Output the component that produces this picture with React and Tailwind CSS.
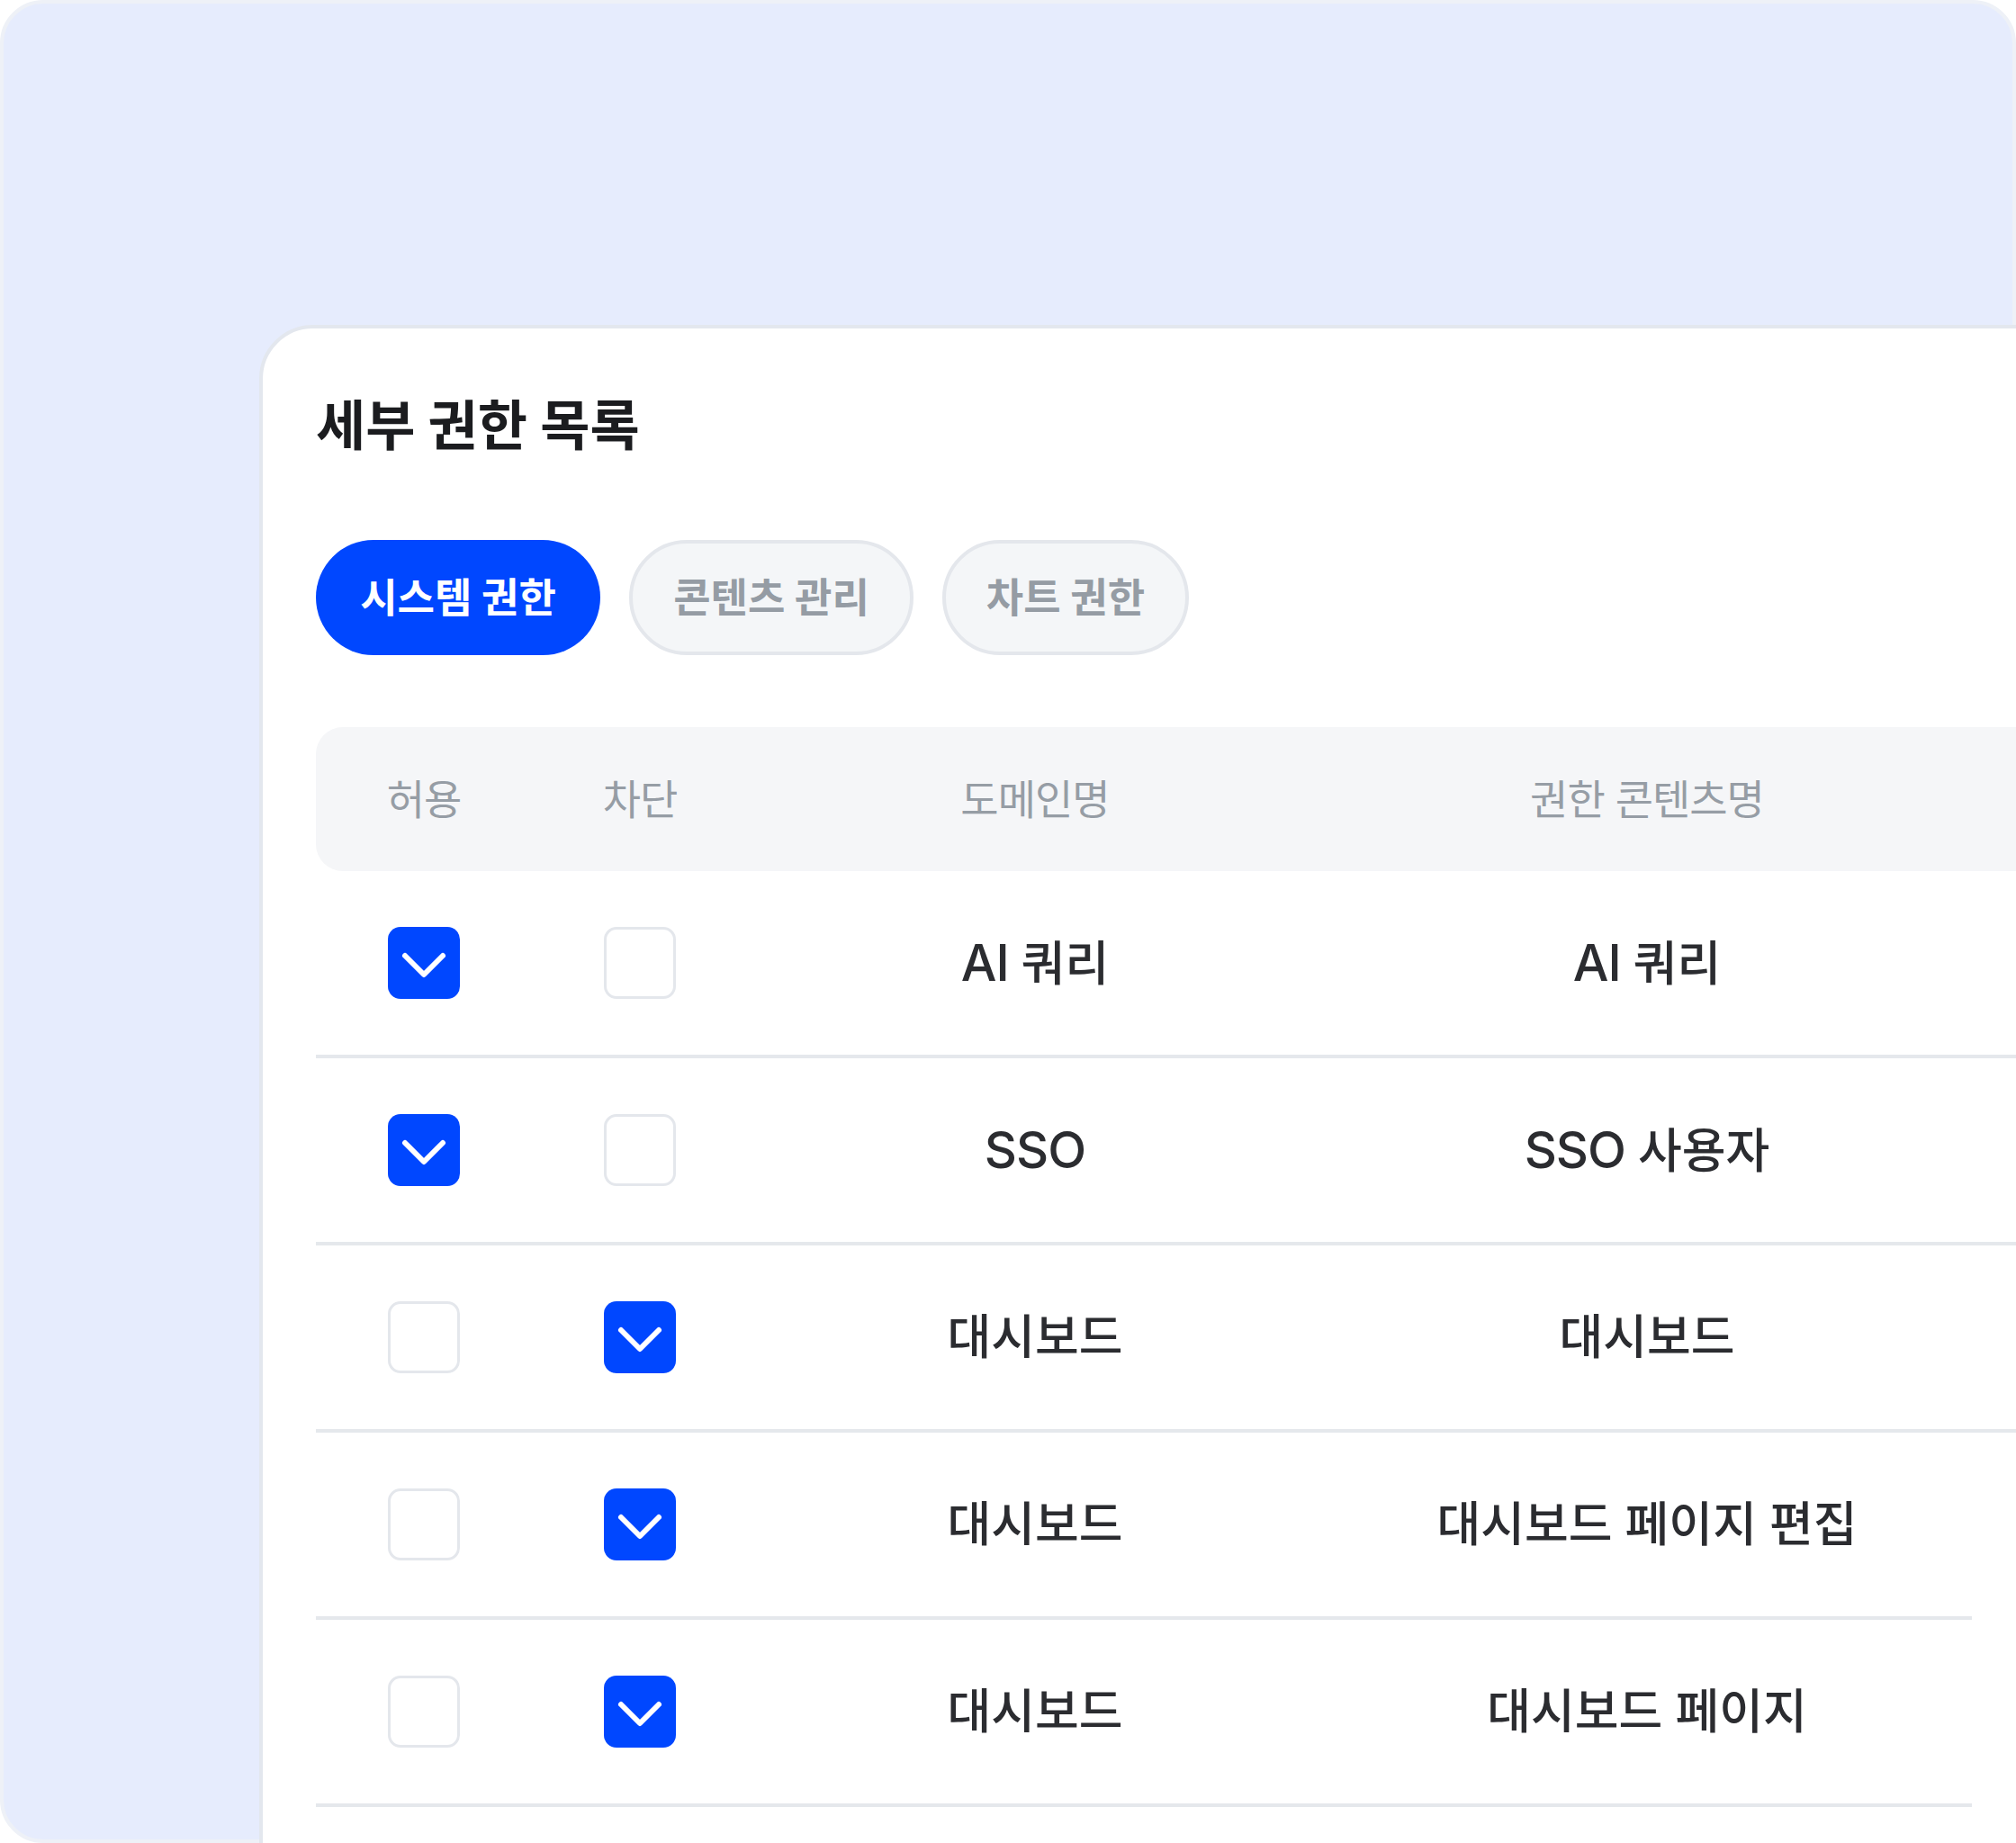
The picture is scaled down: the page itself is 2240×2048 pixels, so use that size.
import React from "react";

const FONT = { fontFamily: '"Inter", "Noto Sans CJK KR", sans-serif' };

function Check({ on }) {
  if (on) {
    return (
      <div className="w-[80px] h-[80px] rounded-[14px] bg-[#0047ff] flex items-center justify-center">
        <svg width="80" height="80" viewBox="0 0 80 80" fill="none">
          <path d="M19 32 L40 53 L61 32" stroke="#ffffff" strokeWidth="6" strokeLinecap="round" strokeLinejoin="round" />
        </svg>
      </div>
    );
  }
  return <div className="w-[80px] h-[80px] rounded-[14px] border-[3px] border-[#e4e7ec] bg-white" />;
}

function Cell({ text }) {
  const parts = text.split(/([A-Za-z]+)/).filter((p) => p.length > 0);
  return (
    <span className="whitespace-pre">
      {parts.map((p, i) =>
        /^[A-Za-z]+$/.test(p) ? (
          <span key={i} className="text-[56px] tracking-[-1px]">{p}</span>
        ) : (
          <span key={i} className="text-[53px] tracking-normal">{p}</span>
        )
      )}
    </span>
  );
}

const rows = [
  { allow: true, block: false, domain: "AI 쿼리", name: "AI 쿼리", full: true },
  { allow: true, block: false, domain: "SSO", name: "SSO 사용자", full: true },
  { allow: false, block: true, domain: "대시보드", name: "대시보드", full: true },
  { allow: false, block: true, domain: "대시보드", name: "대시보드 페이지 편집", full: false },
  { allow: false, block: true, domain: "대시보드", name: "대시보드 페이지", full: false },
];

export default function App() {
  return (
    <div className="w-[2240px] h-[2048px] overflow-hidden bg-white" style={FONT}>
      <div className="w-[2240px] h-[2048px] rounded-[48px] border-4 border-[#eef1f7] bg-[#e6ecfd] pl-[284px] pt-[357px]">
        <div className="w-[2100px] h-[1800px] rounded-[60px] border-4 border-[#e3e7ee] bg-white pl-[59px] pt-[78px]">
          <div className="h-[60px] text-[60px] leading-none font-bold tracking-normal text-[#1b1c1f] whitespace-nowrap">
            세부 권한 목록
          </div>

          <div className="mt-[97px] flex gap-8">
            <div className="h-[128px] w-[316px] rounded-full bg-[#0047ff] flex items-center justify-center text-[45px] leading-none font-bold tracking-normal text-white">
              시스템 권한
            </div>
            <div className="h-[128px] w-[316px] rounded-full border-4 border-[#e4e7ec] bg-[#f4f6f8] flex items-center justify-center text-[45px] leading-none font-bold tracking-normal text-[#959ca4]">
              콘텐츠 관리
            </div>
            <div className="h-[128px] w-[274px] rounded-full border-4 border-[#e4e7ec] bg-[#f4f6f8] flex items-center justify-center text-[45px] leading-none font-bold tracking-normal text-[#959ca4]">
              차트 권한
            </div>
          </div>

          <div className="mt-[80px]">
            <div className="h-[160px] w-[1950px] rounded-[30px] bg-[#f5f6f8] flex items-center text-[46px] leading-none tracking-[-1px] text-[#969da5]">
              <div className="w-[240px] text-center">허용</div>
              <div className="w-[240px] text-center">차단</div>
              <div className="w-[638px] text-center">도메인명</div>
              <div className="w-[722px] text-center">권한 콘텐츠명</div>
            </div>

            {rows.map((r, i) => (
              <div
                key={i}
                className={
                  "h-[208px] border-b-4 border-[#e5e8ec] flex items-center font-medium leading-none text-[#2b2c30] " +
                  (r.full ? "w-[1950px]" : "w-[1840px]")
                }
              >
                <div className="w-[240px] flex justify-center">
                  <Check on={r.allow} />
                </div>
                <div className="w-[240px] flex justify-center">
                  <Check on={r.block} />
                </div>
                <div className="w-[638px] text-center">
                  <Cell text={r.domain} />
                </div>
                <div className="w-[722px] text-center">
                  <Cell text={r.name} />
                </div>
              </div>
            ))}
          </div>
        </div>
      </div>
    </div>
  );
}
